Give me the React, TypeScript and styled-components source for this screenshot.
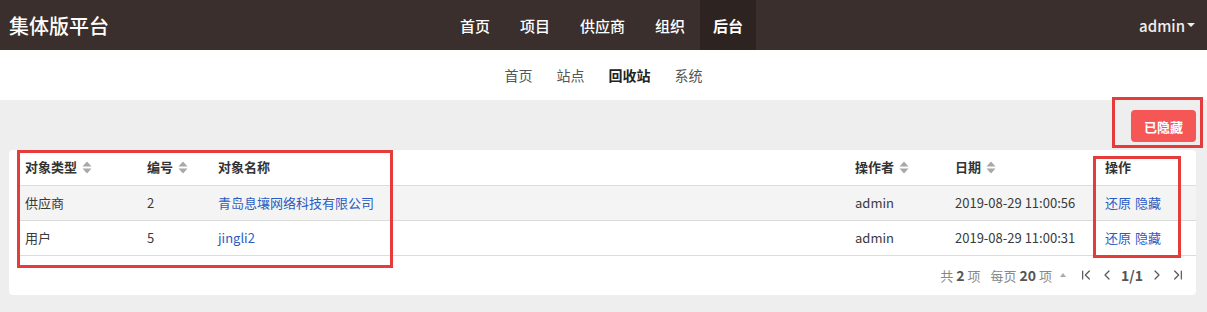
import React, { FC } from 'react';
import styled, { createGlobalStyle } from 'styled-components';
import { ChevronFirst, ChevronLast, ChevronLeft, ChevronRight } from 'lucide-react';

const GlobalStyle = createGlobalStyle`
  body {
    margin: 0;
    background: #eeeeee;
    font-family: "Noto Sans CJK SC", "Noto Sans", sans-serif;
    color: #333;
  }
`;

const Page = styled.div`
  position: relative;
  width: 1207px;
  height: 312px;
  overflow: hidden;
  background: #eeeeee;
`;

const TopBar = styled.div`
  height: 50px;
  background: #3a2f2c;
  display: flex;
  align-items: center;
  padding: 0 12px 0 9px;
`;

const Brand = styled.div`
  color: #fff;
  font-size: 20px;
  font-weight: 500;
  width: 300px;
`;

const MainNav = styled.nav`
  display: flex;
  height: 50px;
  margin-left: 136px;
`;

const MainNavItem = styled.a<{ $active?: boolean }>`
  display: flex;
  align-items: center;
  padding: 0 ${p => (p.$active ? '13px' : '15px')};
  font-size: 15px;
  font-weight: ${p => (p.$active ? 700 : 500)};
  color: #fff;
  background: ${p => (p.$active ? '#2d2421' : 'transparent')};
`;

const UserMenu = styled.div`
  margin-left: auto;
  display: flex;
  align-items: center;
  color: #eee;
  font-size: 15px;
  font-weight: 500;
`;

const Caret = styled.span`
  display: inline-block;
  margin-left: 2px;
  border-left: 4px solid transparent;
  border-right: 4px solid transparent;
  border-top: 4px solid #eee;
`;

const SubBar = styled.div`
  height: 50px;
  background: #fff;
  display: flex;
  justify-content: center;
  align-items: center;
  gap: 24px;
`;

const SubNavItem = styled.a<{ $active?: boolean }>`
  font-size: 14px;
  color: ${p => (p.$active ? '#222' : '#555')};
  font-weight: ${p => (p.$active ? 700 : 400)};
`;

const Content = styled.div`
  padding: 10px 11px 0 9px;
`;

const Toolbar = styled.div`
  display: flex;
  justify-content: flex-end;
  height: 32px;
  margin-bottom: 8px;
`;

const DangerButton = styled.button`
  width: 65px;
  height: 32px;
  border: none;
  border-radius: 4px;
  background: #f55656;
  color: #fff;
  font-family: inherit;
  font-size: 13px;
  font-weight: 700;
`;

const Card = styled.div`
  background: #fff;
  border-radius: 4px;
  padding: 0 0 0 8px;
`;

const Table = styled.table`
  width: 100%;
  border-collapse: collapse;
  table-layout: fixed;
  font-size: 13px;
  line-height: 18px;
`;

const Th = styled.th<{ $w?: number }>`
  box-sizing: border-box;
  width: ${p => (p.$w ? `${p.$w}px` : 'auto')};
  height: 35px;
  padding: 0 0 0 8px;
  text-align: left;
  font-weight: 700;
  color: #333;
  white-space: nowrap;
  border-bottom: 1px solid #dcdcdc;
`;

const Row = styled.tr<{ $striped?: boolean }>`
  background: ${p => (p.$striped ? '#f4f4f4' : '#fff')};
`;

const Td = styled.td`
  box-sizing: border-box;
  height: 35px;
  padding: 0 0 0 8px;
  color: #3a3a3a;
  white-space: nowrap;
  border-bottom: 1px solid #dcdcdc;
`;

const Link = styled.a`
  color: #2b5cc4;
  margin-right: 4px;
`;

const SortIcon: FC = () => (
  <svg width="10" height="13" viewBox="0 0 10 13" style={{ marginLeft: 5, verticalAlign: -2 }}>
    <path d="M5 0.5 L9.5 5.5 H0.5 Z" fill="#a8a8a8" />
    <path d="M5 12.5 L9.5 7.5 H0.5 Z" fill="#a8a8a8" />
  </svg>
);

const Pager = styled.div`
  height: 39px;
  display: flex;
  justify-content: flex-end;
  align-items: center;
  padding-right: 10px;
  font-size: 13px;
  color: #888;
  gap: 10px;
`;

const PagerText = styled.span`
  display: flex;
  align-items: center;
  gap: 3px;
`;

const Strong = styled.b`
  color: #555;
  font-size: 14px;
`;

const UpCaret = styled.span`
  display: inline-block;
  margin: 0 2px 0 5px;
  border-left: 3px solid transparent;
  border-right: 3px solid transparent;
  border-bottom: 4px solid #aaa;
`;

const PagerNav = styled.span`
  display: flex;
  align-items: center;
  gap: 3px;
  color: #555;
`;

const Annotation = styled.div<{ $top: number; $left: number; $w: number; $h: number }>`
  position: absolute;
  top: ${p => p.$top}px;
  left: ${p => p.$left}px;
  width: ${p => p.$w}px;
  height: ${p => p.$h}px;
  border: 3px solid #e63b3b;
  box-sizing: border-box;
  pointer-events: none;
`;

const rows = [
  { type: '供应商', id: '2', name: '青岛息壤网络科技有限公司', op: 'admin', date: '2019-08-29 11:00:56' },
  { type: '用户', id: '5', name: 'jingli2', op: 'admin', date: '2019-08-29 11:00:31' },
];

const App: FC = () => (
  <Page>
    <GlobalStyle />
    <TopBar>
      <Brand>集体版平台</Brand>
      <MainNav>
        <MainNavItem>首页</MainNavItem>
        <MainNavItem>项目</MainNavItem>
        <MainNavItem>供应商</MainNavItem>
        <MainNavItem>组织</MainNavItem>
        <MainNavItem $active>后台</MainNavItem>
      </MainNav>
      <UserMenu>
        admin<Caret />
      </UserMenu>
    </TopBar>
    <SubBar>
      <SubNavItem>首页</SubNavItem>
      <SubNavItem>站点</SubNavItem>
      <SubNavItem $active>回收站</SubNavItem>
      <SubNavItem>系统</SubNavItem>
    </SubBar>
    <Content>
      <Toolbar>
        <DangerButton>已隐藏</DangerButton>
      </Toolbar>
      <Card>
        <Table>
          <thead>
            <tr>
              <Th $w={122}>对象类型<SortIcon /></Th>
              <Th $w={71}>编号<SortIcon /></Th>
              <Th $w={637}>对象名称</Th>
              <Th $w={100}>操作者<SortIcon /></Th>
              <Th $w={150}>日期<SortIcon /></Th>
              <Th>操作</Th>
            </tr>
          </thead>
          <tbody>
            {rows.map((r, i) => (
              <Row key={r.id} $striped={i % 2 === 0}>
                <Td>{r.type}</Td>
                <Td>{r.id}</Td>
                <Td><Link>{r.name}</Link></Td>
                <Td>{r.op}</Td>
                <Td>{r.date}</Td>
                <Td><Link>还原</Link><Link>隐藏</Link></Td>
              </Row>
            ))}
          </tbody>
        </Table>
        <Pager>
          <PagerText>共 <Strong>2</Strong> 项</PagerText>
          <PagerText>每页 <Strong>20</Strong> 项<UpCaret /></PagerText>
          <PagerNav>
            <ChevronFirst size={16} strokeWidth={1.8} />
            <ChevronLeft size={16} strokeWidth={1.8} style={{ marginLeft: 2 }} />
            <Strong style={{ margin: '0 3px' }}>1/1</Strong>
            <ChevronRight size={16} strokeWidth={1.8} />
            <ChevronLast size={16} strokeWidth={1.8} style={{ marginLeft: 2 }} />
          </PagerNav>
        </Pager>
      </Card>
    </Content>
    <Annotation $top={97} $left={1112} $w={91} $h={51} />
    <Annotation $top={150} $left={17} $w={376} $h={118} />
    <Annotation $top={156} $left={1093} $w={88} $h={102} />
  </Page>
);

export default App;
